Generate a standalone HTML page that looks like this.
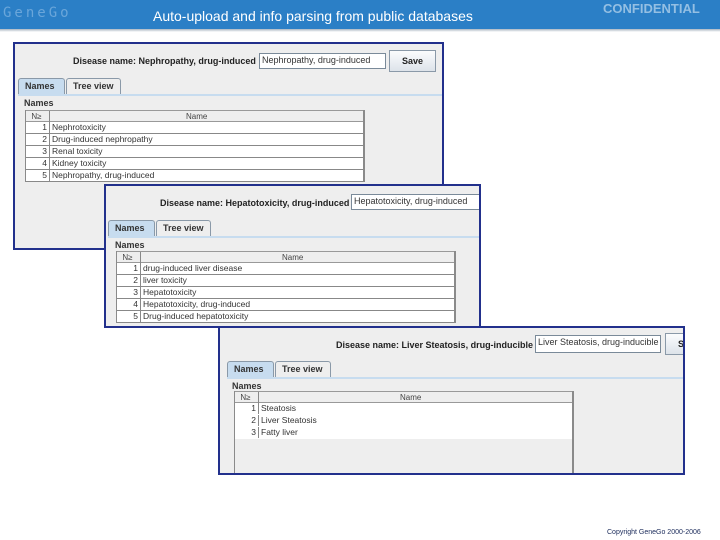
<!DOCTYPE html>
<html><head><meta charset="utf-8"><style>
*{margin:0;padding:0;box-sizing:border-box}
body{width:720px;height:540px;background:#fff;position:relative;overflow:hidden;font-family:"Liberation Sans",sans-serif}
.a{position:absolute}
.hdr{left:0;top:0;width:720px;height:29px;background:#2b7fc6}
.sh{left:0;top:29px;width:720px;height:3px;background:linear-gradient(#a8b4c0,#fff)}
.panel{position:absolute;background:#eeeeee;border:2px solid #22308c;overflow:hidden}
.lbl{position:absolute;font-size:9px;font-weight:bold;color:#222;white-space:nowrap}
.fld{position:absolute;background:#fff;border:1px solid #7a8a99;font-size:9px;color:#333;padding:1px 2px;white-space:nowrap;overflow:hidden}
.btn{position:absolute;border:1px solid #8a99a8;background:linear-gradient(#fbfcfd,#dde3ea);font-size:9px;font-weight:bold;text-align:center;color:#222}
.tab{position:absolute;height:16px;border:1px solid #8a99a8;border-bottom:none;font-size:9px;font-weight:bold;color:#333;padding:2px 0 0 6px;background:#eee;border-radius:3px 3px 0 0}
.tab.s{background:#c7dcef}
.tl{position:absolute;height:2px;background:#c7dcef}
.nm{position:absolute;font-size:9px;font-weight:bold;color:#333}
.tbl{position:absolute;border-left:1px solid #8a8a8a;border-right:2px solid #8a8a8a}
.th{height:12px;background:#eee;border-top:1px solid #999;border-bottom:1px solid #999;font-size:8px;color:#444;position:relative}
.tr{height:12px;background:#fff;border-bottom:1px solid #888;font-size:8.5px;color:#333;position:relative;white-space:nowrap}
.n{position:absolute;left:0;width:24px;text-align:right;padding-right:2px;top:0;height:11px;border-right:1px solid #888;line-height:11px}
.t{position:absolute;left:26px;top:0;line-height:11px}
.tr.nb{border-bottom:none}
</style></head><body>
<div class="a hdr"></div><div class="a sh"></div>
<div class="a" style="left:3px;top:5px;font-size:14px;color:#6aa6da;letter-spacing:3px;font-family:'DejaVu Sans Mono',monospace">GeneGo</div>
<div class="a" style="left:153px;top:8px;font-size:14px;color:#fff">Auto-upload and info parsing from public databases</div>
<div class="a" style="left:603px;top:1px;font-size:13px;font-weight:bold;color:#94bfe3">CONFIDENTIAL</div>

<div class="panel" style="left:13px;top:42px;width:431px;height:208px">
<div class="lbl" style="left:58px;top:12px">Disease name: Nephropathy, drug-induced</div>
<div class="fld" style="left:244px;top:9px;width:127px;height:16px">Nephropathy, drug-induced</div>
<div class="btn" style="left:374px;top:6px;width:47px;height:22px;line-height:20px">Save</div>
<div class="tab s" style="left:3px;top:34px;width:47px">Names</div>
<div class="tab" style="left:51px;top:34px;width:55px">Tree view</div>
<div class="tl" style="left:3px;top:50px;width:430px"></div>
<div class="nm" style="left:9px;top:54px">Names</div>
<div class="tbl" style="left:10px;top:66px;width:340px">
<div class="th"><span class="n" style="text-align:center">N≥</span><span class="t" style="left:160px">Name</span></div>
<div class="tr"><span class="n">1</span><span class="t">Nephrotoxicity</span></div>
<div class="tr"><span class="n">2</span><span class="t">Drug-induced nephropathy</span></div>
<div class="tr"><span class="n">3</span><span class="t">Renal toxicity</span></div>
<div class="tr"><span class="n">4</span><span class="t">Kidney toxicity</span></div>
<div class="tr"><span class="n">5</span><span class="t">Nephropathy, drug-induced</span></div>
</div>
</div>

<div class="panel" style="left:104px;top:184px;width:377px;height:144px">
<div class="lbl" style="left:54px;top:12px">Disease name: Hepatotoxicity, drug-induced</div>
<div class="fld" style="left:245px;top:8px;width:130px;height:16px">Hepatotoxicity, drug-induced</div>
<div class="tab s" style="left:2px;top:34px;width:47px">Names</div>
<div class="tab" style="left:50px;top:34px;width:55px">Tree view</div>
<div class="tl" style="left:2px;top:50px;width:375px"></div>
<div class="nm" style="left:9px;top:54px">Names</div>
<div class="tbl" style="left:10px;top:65px;width:340px">
<div class="th"><span class="n" style="text-align:center">N≥</span><span class="t" style="left:165px">Name</span></div>
<div class="tr"><span class="n">1</span><span class="t">drug-induced liver disease</span></div>
<div class="tr"><span class="n">2</span><span class="t">liver toxicity</span></div>
<div class="tr"><span class="n">3</span><span class="t">Hepatotoxicity</span></div>
<div class="tr"><span class="n">4</span><span class="t">Hepatotoxicity, drug-induced</span></div>
<div class="tr"><span class="n">5</span><span class="t">Drug-induced hepatotoxicity</span></div>
</div>
</div>

<div class="panel" style="left:218px;top:326px;width:467px;height:149px">
<div class="lbl" style="left:116px;top:12px">Disease name: Liver Steatosis, drug-inducible</div>
<div class="fld" style="left:315px;top:7px;width:126px;height:18px">Liver Steatosis, drug-inducible</div>
<div class="btn" style="left:445px;top:5px;width:30px;height:22px;line-height:20px;text-align:left;padding-left:12px">S</div>
<div class="tab s" style="left:7px;top:33px;width:47px">Names</div>
<div class="tab" style="left:55px;top:33px;width:56px">Tree view</div>
<div class="tl" style="left:7px;top:49px;width:460px"></div>
<div class="nm" style="left:12px;top:53px">Names</div>
<div class="tbl" style="left:14px;top:63px;width:340px;height:90px;background:#eee">
<div class="th"><span class="n" style="text-align:center">N≥</span><span class="t" style="left:165px">Name</span></div>
<div class="tr nb"><span class="n">1</span><span class="t">Steatosis</span></div>
<div class="tr nb"><span class="n">2</span><span class="t">Liver Steatosis</span></div>
<div class="tr nb"><span class="n">3</span><span class="t">Fatty liver</span></div>
</div>
</div>

<div class="a" style="left:607px;top:529px;font-size:7px;color:#1a2a5a">Copyright GeneGo 2000-2006</div>
</body></html>
